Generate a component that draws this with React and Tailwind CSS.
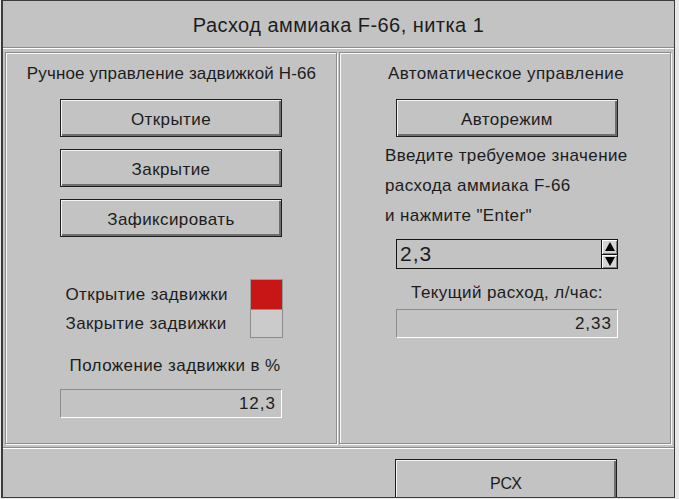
import React from 'react';

const font = { fontFamily: '"Liberation Sans", Arial, sans-serif' };

function Button({ label, className = '' }) {
    return (
        <div
            className={`h-[38px] w-[222px] flex items-center justify-center pt-[3px] border border-[#1e1e1e] bg-[#c3c3c3] text-[17px] tracking-[0.4px] text-[#1c1c1c] shadow-[inset_1px_1px_0_#f4f4f4,inset_-2px_-2px_0_#6e6e6e] ${className}`}
        >
            {label}
        </div>
    );
}

function Display({ value, className = '' }) {
    return (
        <div
            className={`h-[29px] w-[222px] flex items-center justify-end pr-[5px] pt-[1px] border-t border-l border-[#8c8c8c] border-b border-r border-b-white border-r-white text-[17px] tracking-[1px] text-[#1c1c1c] ${className}`}
        >
            {value}
        </div>
    );
}

function Panel({ children }) {
    return (
        <div className="w-[332px] h-[392px] border border-[#8c8c8c] shadow-[inset_1px_1px_0_#fafafa,1px_1px_0_#fafafa] flex flex-col">
            {children}
        </div>
    );
}

function SpinBox({ value }) {
    return (
        <div className="ml-[56px] mt-[8px] h-[30px] w-[222px] flex border border-[#141414]">
            <div className="flex-1 flex items-center pl-[3px] text-[21px] tracking-[1px] text-[#1c1c1c]">{value}</div>
            <div className="w-[16px] flex flex-col border-l border-[#141414]">
                <div className="flex-1 flex items-center justify-center bg-[#d4d4d4] border-b border-[#141414] shadow-[inset_1px_1px_0_#fff,inset_-1px_-1px_0_#808080]">
                    <svg width="10" height="9" viewBox="0 0 10 9">
                        <polygon points="5,0 10,9 0,9" fill="#000" />
                    </svg>
                </div>
                <div className="flex-1 flex items-center justify-center bg-[#d4d4d4] shadow-[inset_1px_1px_0_#fff,inset_-1px_-1px_0_#808080]">
                    <svg width="10" height="9" viewBox="0 0 10 9">
                        <polygon points="0,0 10,0 5,9" fill="#000" />
                    </svg>
                </div>
            </div>
        </div>
    );
}

export default function App() {
    return (
        <div className="w-[679px] h-[499px] bg-[#e8e8e8] overflow-hidden" style={font}>
            <div className="ml-[1px] w-[674px] h-[498px] border border-l-2 border-[#3c3c3c] bg-[#c3c3c3] flex flex-col text-[#1c1c1c]">
                {/* title */}
                <div className="h-[46px] flex items-center justify-center text-[20px] tracking-[0.45px] pt-[1px]">
                    Расход аммиака F-66, нитка 1
                </div>
                <div className="h-[2px] border-t border-[#8c8c8c] border-b border-b-white" />

                {/* panels */}
                <div className="flex gap-[2px] pl-[2px] pt-[3px] text-[17px] tracking-[0.4px]">
                    <Panel>
                        <div className="mt-[11px] h-[20px] leading-[20px] text-center tracking-[0.15px] pl-[1px]">
                            Ручное управление задвижкой Н-66
                        </div>
                        <Button label="Открытие" className="self-center mt-[15px]" />
                        <Button label="Закрытие" className="self-center mt-[12px]" />
                        <Button label="Зафиксировать" className="self-center mt-[12px]" />

                        <div className="self-center mt-[42px] w-[223px] flex">
                            <div className="flex-1 flex flex-col pl-[6px]">
                                <div className="h-[30px] flex items-center pt-[2px]">Открытие задвижки</div>
                                <div className="h-[29px] flex items-center pt-[1px]">Закрытие задвижки</div>
                            </div>
                            <div className="w-[33px] flex flex-col">
                                <div className="h-[30px] bg-[#c81616] border border-[#9a9a9a] border-b-0" />
                                <div className="h-[29px] bg-[#cbcbcb] border border-[#8c8c8c]" />
                            </div>
                        </div>

                        <div className="mt-[18px] h-[20px] leading-[20px] text-center pl-[8px]">
                            Положение задвижки в %
                        </div>
                        <Display value="12,3" className="self-center mt-[13px]" />
                    </Panel>

                    <Panel>
                        <div className="mt-[11px] h-[20px] leading-[20px] text-center pl-[2px]">
                            Автоматическое управление
                        </div>
                        <Button label="Авторежим" className="ml-[56px] mt-[15px]" />
                        <div className="mt-[4px] pl-[45px]">
                            <div className="h-[30px] flex items-center">Введите требуемое значение</div>
                            <div className="h-[30px] flex items-center">расхода аммиака F-66</div>
                            <div className="h-[30px] flex items-center">и нажмите "Enter"</div>
                        </div>
                        <SpinBox value="2,3" />
                        <div className="mt-[14px] h-[20px] leading-[20px] text-center pl-[4px]">
                            Текущий расход, л/час:
                        </div>
                        <Display value="2,33" className="ml-[56px] mt-[6px]" />
                    </Panel>
                </div>

                {/* bottom bar */}
                <div className="mt-[3px] h-[2px] border-t border-[#8c8c8c] border-b border-b-white" />
                <div className="flex-1 overflow-hidden">
                    <div className="ml-[392px] mt-[10px] h-[40px] w-[222px] flex items-start justify-center pt-[12px] border border-b-0 border-[#1e1e1e] text-[16px] shadow-[inset_1px_1px_0_#f4f4f4,inset_-2px_0_0_#6e6e6e]">
                        РСХ
                    </div>
                </div>
            </div>
        </div>
    );
}
